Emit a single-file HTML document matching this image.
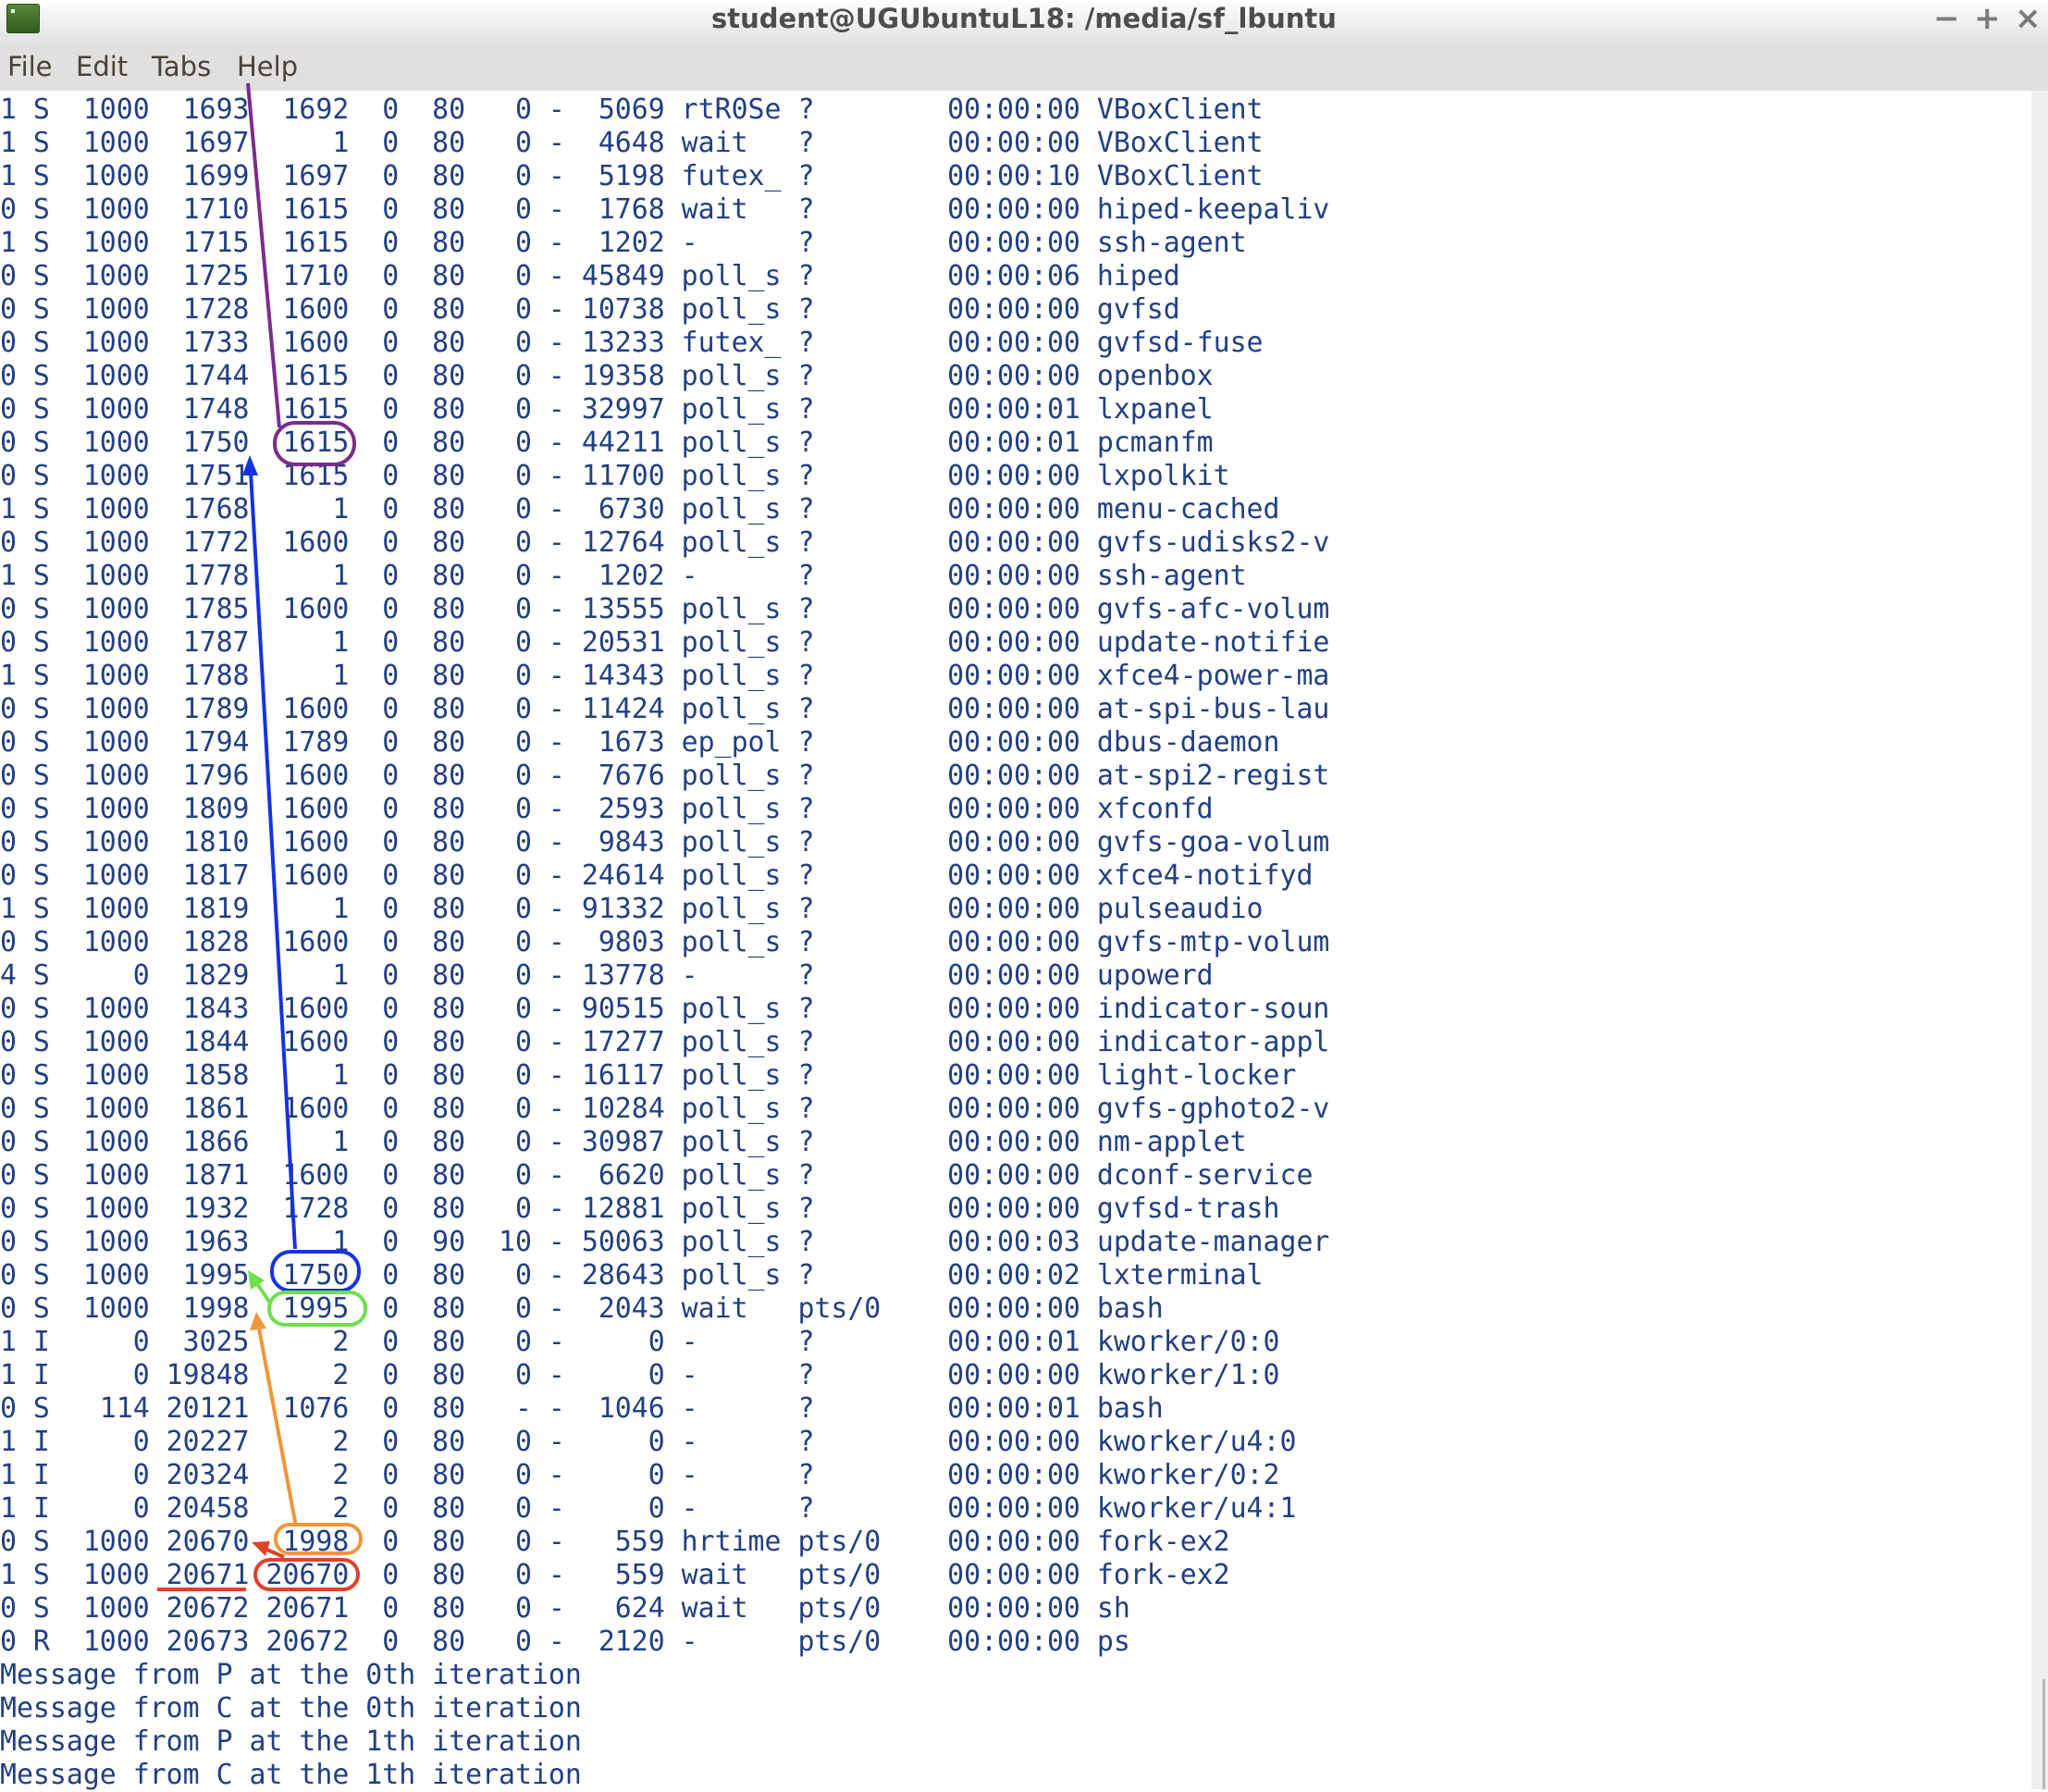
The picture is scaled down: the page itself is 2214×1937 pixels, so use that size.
<!DOCTYPE html>
<html><head><meta charset="utf-8">
<style>
html,body{margin:0;padding:0;}
body{width:2214px;height:1934px;position:relative;overflow:hidden;background:#fff;font-family:"DejaVu Sans","Liberation Sans",sans-serif;}
#title{position:absolute;left:0;top:0;width:2214px;height:46px;background:linear-gradient(#ffffff,#e2e2e2);}
#title .t{position:absolute;left:0;width:2214px;top:1px;text-align:center;font-weight:bold;font-size:29px;color:#4d4d4d;line-height:38px;}
#icon{position:absolute;left:7px;top:4px;width:36px;height:32px;border-radius:3px;background:linear-gradient(#5a8a3a,#2f5a1c);box-shadow:inset 0 0 0 1px #2a4a18;}
#icon:after{content:"";position:absolute;left:5px;top:6px;width:4px;height:4px;background:#cfe;}
.ctl{position:absolute;top:0;font-size:34px;font-weight:bold;color:#7a7a7a;line-height:40px;}
#menu{position:absolute;left:0;top:46px;width:2214px;height:52px;background:#e0e0e0;font-size:29px;color:#4a4238;line-height:52px;}
#menu span{position:absolute;top:0;}
#sb{position:absolute;left:2196px;top:98px;width:18px;height:1836px;background:#efefef;}
#thumb{position:absolute;left:2208px;top:1815px;width:3px;height:119px;background:#b8b8b8;}
pre{position:absolute;left:0;top:101px;margin:0;font-family:"DejaVu Sans Mono","Liberation Mono",monospace;font-size:29.85px;line-height:36px;color:#213f82;}
svg{position:absolute;left:0;top:0;}
</style></head><body>
<div id="title"><div id="icon"></div><div class="t">student@UGUbuntuL18: /media/sf_lbuntu</div>
<div class="ctl" style="left:2090px">−</div><div class="ctl" style="left:2134px">+</div><div class="ctl" style="left:2178px">×</div></div>
<div id="menu"><span style="left:8px">File</span><span style="left:82px">Edit</span><span style="left:164px">Tabs</span><span style="left:256px">Help</span></div>
<div id="sb"></div><div id="thumb"></div>
<pre>1 S  1000  1693  1692  0  80   0 -  5069 rtR0Se ?        00:00:00 VBoxClient
1 S  1000  1697     1  0  80   0 -  4648 wait   ?        00:00:00 VBoxClient
1 S  1000  1699  1697  0  80   0 -  5198 futex_ ?        00:00:10 VBoxClient
0 S  1000  1710  1615  0  80   0 -  1768 wait   ?        00:00:00 hiped-keepaliv
1 S  1000  1715  1615  0  80   0 -  1202 -      ?        00:00:00 ssh-agent
0 S  1000  1725  1710  0  80   0 - 45849 poll_s ?        00:00:06 hiped
0 S  1000  1728  1600  0  80   0 - 10738 poll_s ?        00:00:00 gvfsd
0 S  1000  1733  1600  0  80   0 - 13233 futex_ ?        00:00:00 gvfsd-fuse
0 S  1000  1744  1615  0  80   0 - 19358 poll_s ?        00:00:00 openbox
0 S  1000  1748  1615  0  80   0 - 32997 poll_s ?        00:00:01 lxpanel
0 S  1000  1750  1615  0  80   0 - 44211 poll_s ?        00:00:01 pcmanfm
0 S  1000  1751  1615  0  80   0 - 11700 poll_s ?        00:00:00 lxpolkit
1 S  1000  1768     1  0  80   0 -  6730 poll_s ?        00:00:00 menu-cached
0 S  1000  1772  1600  0  80   0 - 12764 poll_s ?        00:00:00 gvfs-udisks2-v
1 S  1000  1778     1  0  80   0 -  1202 -      ?        00:00:00 ssh-agent
0 S  1000  1785  1600  0  80   0 - 13555 poll_s ?        00:00:00 gvfs-afc-volum
0 S  1000  1787     1  0  80   0 - 20531 poll_s ?        00:00:00 update-notifie
1 S  1000  1788     1  0  80   0 - 14343 poll_s ?        00:00:00 xfce4-power-ma
0 S  1000  1789  1600  0  80   0 - 11424 poll_s ?        00:00:00 at-spi-bus-lau
0 S  1000  1794  1789  0  80   0 -  1673 ep_pol ?        00:00:00 dbus-daemon
0 S  1000  1796  1600  0  80   0 -  7676 poll_s ?        00:00:00 at-spi2-regist
0 S  1000  1809  1600  0  80   0 -  2593 poll_s ?        00:00:00 xfconfd
0 S  1000  1810  1600  0  80   0 -  9843 poll_s ?        00:00:00 gvfs-goa-volum
0 S  1000  1817  1600  0  80   0 - 24614 poll_s ?        00:00:00 xfce4-notifyd
1 S  1000  1819     1  0  80   0 - 91332 poll_s ?        00:00:00 pulseaudio
0 S  1000  1828  1600  0  80   0 -  9803 poll_s ?        00:00:00 gvfs-mtp-volum
4 S     0  1829     1  0  80   0 - 13778 -      ?        00:00:00 upowerd
0 S  1000  1843  1600  0  80   0 - 90515 poll_s ?        00:00:00 indicator-soun
0 S  1000  1844  1600  0  80   0 - 17277 poll_s ?        00:00:00 indicator-appl
0 S  1000  1858     1  0  80   0 - 16117 poll_s ?        00:00:00 light-locker
0 S  1000  1861  1600  0  80   0 - 10284 poll_s ?        00:00:00 gvfs-gphoto2-v
0 S  1000  1866     1  0  80   0 - 30987 poll_s ?        00:00:00 nm-applet
0 S  1000  1871  1600  0  80   0 -  6620 poll_s ?        00:00:00 dconf-service
0 S  1000  1932  1728  0  80   0 - 12881 poll_s ?        00:00:00 gvfsd-trash
0 S  1000  1963     1  0  90  10 - 50063 poll_s ?        00:00:03 update-manager
0 S  1000  1995  1750  0  80   0 - 28643 poll_s ?        00:00:02 lxterminal
0 S  1000  1998  1995  0  80   0 -  2043 wait   pts/0    00:00:00 bash
1 I     0  3025     2  0  80   0 -     0 -      ?        00:00:01 kworker/0:0
1 I     0 19848     2  0  80   0 -     0 -      ?        00:00:00 kworker/1:0
0 S   114 20121  1076  0  80   - -  1046 -      ?        00:00:01 bash
1 I     0 20227     2  0  80   0 -     0 -      ?        00:00:00 kworker/u4:0
1 I     0 20324     2  0  80   0 -     0 -      ?        00:00:00 kworker/0:2
1 I     0 20458     2  0  80   0 -     0 -      ?        00:00:00 kworker/u4:1
0 S  1000 20670  1998  0  80   0 -   559 hrtime pts/0    00:00:00 fork-ex2
1 S  1000 20671 20670  0  80   0 -   559 wait   pts/0    00:00:00 fork-ex2
0 S  1000 20672 20671  0  80   0 -   624 wait   pts/0    00:00:00 sh
0 R  1000 20673 20672  0  80   0 -  2120 -      pts/0    00:00:00 ps
Message from P at the 0th iteration
Message from C at the 0th iteration
Message from P at the 1th iteration
Message from C at the 1th iteration</pre>
<svg width="2214" height="1934" viewBox="0 0 2214 1934" fill="none" stroke-width="4">
<line x1="268" y1="90" x2="302" y2="462" stroke="#7b2d8b"/>
<rect x="297" y="457" width="86" height="45" rx="22" stroke="#7b2d8b"/>
<line x1="319" y1="1350" x2="271" y2="510" stroke="#1633e0"/>
<polygon points="270,492 262,514 279,514" fill="#1633e0" stroke="none"/>
<rect x="294" y="1353" width="94" height="42" rx="20" stroke="#1633e0"/>
<rect x="291" y="1397" width="104" height="35" rx="17" stroke="#6ee04a"/>
<line x1="293" y1="1410" x2="277" y2="1386" stroke="#6ee04a"/>
<polygon points="268,1373 271,1394 286,1384" fill="#6ee04a" stroke="none"/>
<line x1="320" y1="1650" x2="280" y2="1436" stroke="#f0963a"/>
<polygon points="277,1418 270,1438 288,1436" fill="#f0963a" stroke="none"/>
<rect x="298" y="1648" width="92" height="31" rx="15" stroke="#f0963a"/>
<rect x="276" y="1686" width="111" height="32" rx="16" stroke="#e0402a"/>
<line x1="307" y1="1683" x2="284" y2="1673" stroke="#e0402a"/>
<polygon points="272,1667 287,1682 292,1666" fill="#e0402a" stroke="none"/>
<line x1="170" y1="1718" x2="266" y2="1718" stroke="#e0402a"/>
</svg>
</body></html>
